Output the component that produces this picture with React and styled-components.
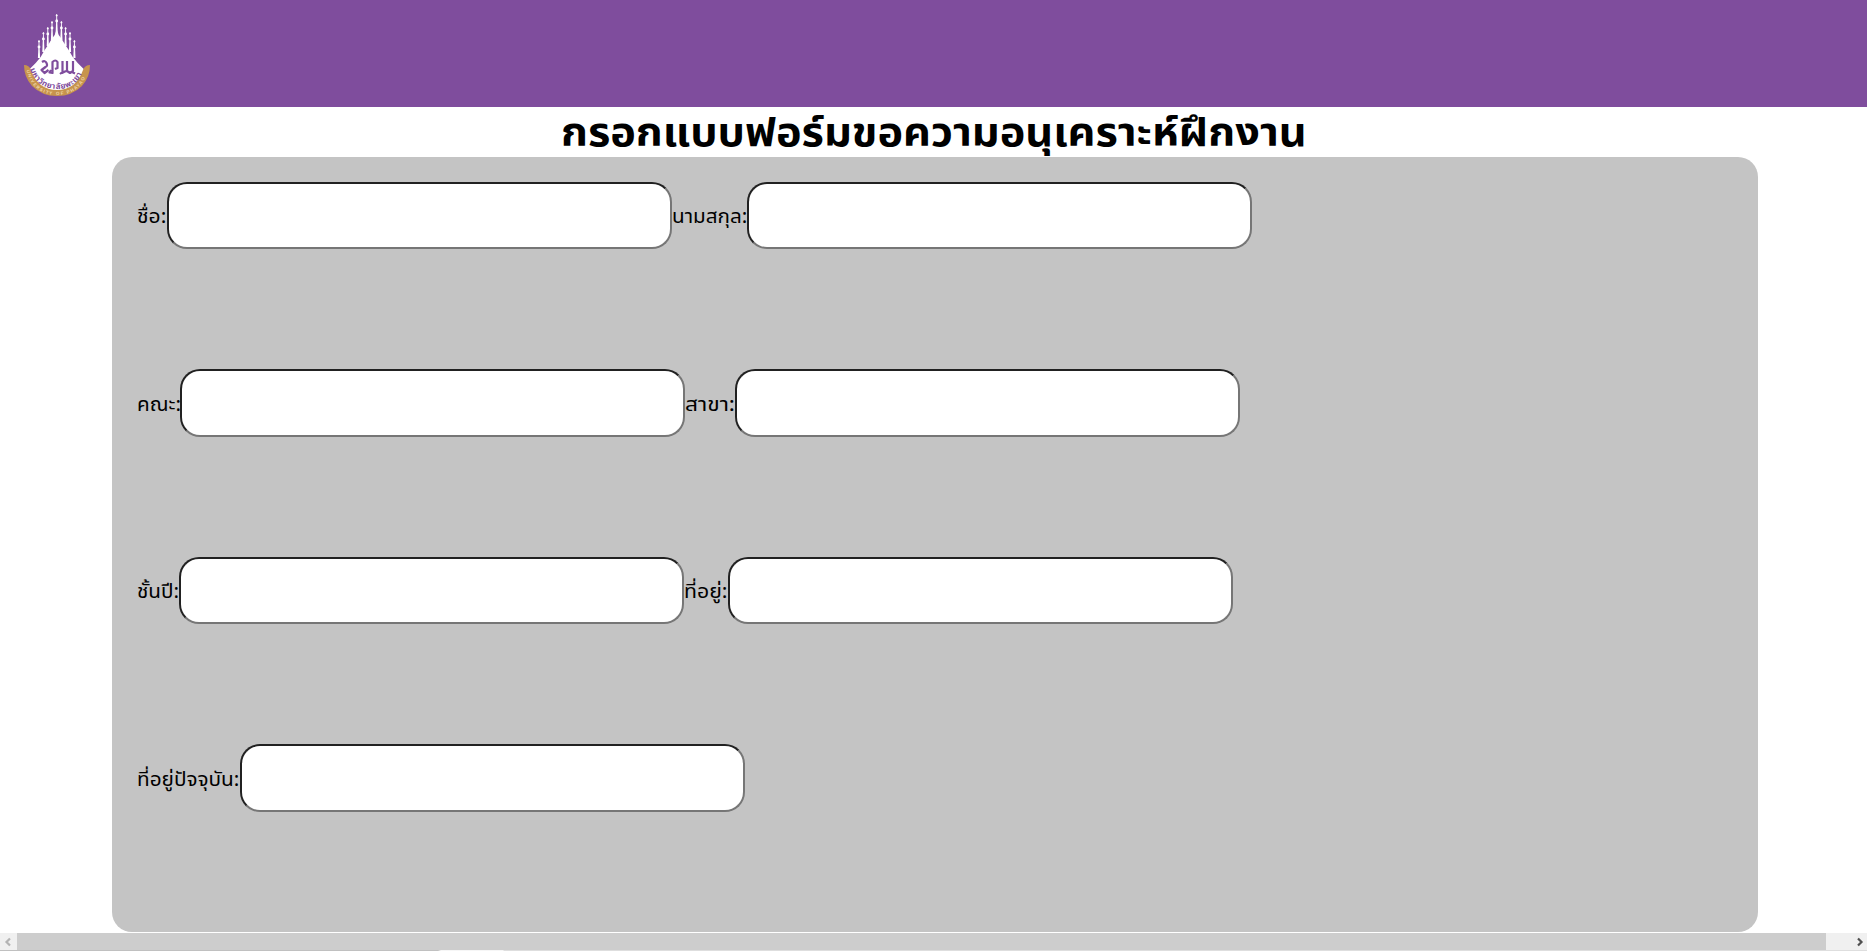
import React from "react";
import styled, { createGlobalStyle } from "styled-components";

const GlobalStyle = createGlobalStyle`
  body {
    margin: 0;
    overflow: hidden;
    background: #fff;
    color: #000;
    font-family: Tahoma, "Noto Sans Thai", "Noto Sans", sans-serif;
  }
`;

const Page = styled.div`
  display: flex;
  flex-direction: column;
  height: 951px;
`;

const Header = styled.header`
  display: flex;
  box-sizing: border-box;
  height: 107px;
  padding: 4px 0 0 10px;
  background: #7f4d9d;
`;

const Title = styled.h1`
  display: flex;
  justify-content: center;
  box-sizing: border-box;
  margin: 0;
  height: 50px;
  padding-top: 3px;
  font-size: 39px;
  line-height: 50px;
  font-weight: 700;
  white-space: nowrap;
`;

const TitleText = styled.span`
  display: block;
  transform: scaleX(1.107);
`;

const Panel = styled.form`
  display: grid;
  grid-auto-rows: 187.45px;
  box-sizing: border-box;
  width: 1646px;
  height: 775px;
  margin: 0 0 1px 112px;
  padding: 25px;
  border-radius: 20px;
  background: #c4c4c4;
`;

const Row = styled.div`
  display: flex;
  align-items: flex-start;
`;

const Label = styled.label`
  flex: none;
  box-sizing: border-box;
  width: ${(p) => p.$width}px;
  padding-top: 2.3px;
  font-size: 19.5px;
  line-height: 67px;
  white-space: nowrap;
`;

const LabelText = styled.span`
  display: inline-block;
  transform: scaleX(${(p) => p.$stretch});
  transform-origin: left center;
`;

const Input = styled.input`
  flex: none;
  box-sizing: border-box;
  width: 505px;
  height: 67.3px;
  margin: 0;
  padding: 0 12px;
  border: 2px inset #767676;
  border-radius: 20px;
  background: #fff;
  outline: none;
`;

const ScrollBar = styled.div`
  display: flex;
  height: 17px;
  background: #f0f0f0;
`;

const Thumb = styled.div`
  width: 1809px;
  background: #cdcdcd;
`;

const Arrow = styled.div`
  display: flex;
  align-items: center;
  width: 17px;
  margin-left: ${(p) => (p.$end ? "auto" : 0)};
  color: ${(p) => (p.$end ? "#505050" : "#b4b4b4")};
`;

const BottomEdge = styled.div`
  height: 1px;
  background: linear-gradient(to right, #c0c0c0 438px, #f6f6f6 441px, #f6f6f6 503px, #dedede 504px);
`;

const spires = [
  [46.7, 14, 34],
  [42, 21, 40],
  [51.4, 21, 40],
  [37.8, 27, 46],
  [55.6, 27, 46],
  [33.4, 32, 52],
  [60, 32, 52],
  [29, 40, 58],
  [64.4, 40, 58],
];

function Logo() {
  return (
    <svg width="95" height="99" viewBox="0 0 95 99">
      <g transform="translate(0 -4)">
        <g fill="#fff">
          {spires.map(([x, y, base]) => (
            <g key={x}>
              <path d={`M${x - 0.3} ${y}h.6l.8 ${base - y}h-2.2z`} />
              <circle cx={x} cy={y + 1.6} r="1" />
              <circle cx={x} cy={y + 7} r="1.4" />
            </g>
          ))}
          <path d="M46.7 29l2 6 3 4 3 5 4 6 4 7 5 6 6 6 2 6-6 7q-9 9-23 9t-23-9l-6-7 2-6 6-6 5-6 4-7 4-6 3-5 3-4z" />
        </g>
        <path
          d="M14 65q5 0 7 5 7 20 26 20t26-20q2-5 7-5 0 12-8 21-10 10-25 10T22 86q-8-9-8-21z"
          fill="#c7944d"
        />
        <g fill="none" stroke="#7f4d9d" strokeWidth="2.2" strokeLinejoin="round">
          <path d="M32 62q3-2 4.500 1t-1 4l-4 3 3 3 4-3" />
          <path d="M41 70l-1.500 2.500 3 .5v-11q3-3 5 0v6l-2.500 1" />
          <path d="M50 74l2.500-2V61M52 73l4-2M57 61v10l3 2 3-2V61M62 72l3 1.500" />
        </g>
        <defs>
          <path id="name-arc" d="M20 69q7 20 27 20t27-20" />
          <path id="university-arc" d="M16.500 70q6 25 30.500 25t30.500-25" />
        </defs>
        <text fill="#7f4d9d" fontSize="8" fontWeight="700" fontFamily="'Noto Sans Thai', sans-serif">
          <textPath href="#name-arc" textLength="67">มหาวิทยาลัยพะเยา</textPath>
        </text>
        <text fill="#f2d8aa" fontSize="4.5" fontWeight="700" fontFamily="'Liberation Sans', sans-serif">
          <textPath href="#university-arc" textLength="78">UNIVERSITY OF PHAYAO</textPath>
        </text>
      </g>
    </svg>
  );
}

function Chevron({ flip }) {
  return (
    <svg width="17" height="17" viewBox="0 0 17 17">
      <path d={flip ? "M8 5.500l3.500 3.500L8 12.500" : "M10 5.500L6.500 9l3.500 3.500"} fill="none" stroke="currentColor" strokeWidth="2.200" />
    </svg>
  );
}

const rows = [
  [
    { text: "ชื่อ:", width: 30, stretch: 1.08 },
    { text: "นามสกุล:", width: 75, stretch: 1.06 },
  ],
  [
    { text: "คณะ:", width: 43, stretch: 1.06 },
    { text: "สาขา:", width: 50, stretch: 1.165 },
  ],
  [
    { text: "ชั้นปี:", width: 42, stretch: 1.06 },
    { text: "ที่อยู่:", width: 44, stretch: 1.09 },
  ],
  [{ text: "ที่อยู่ปัจจุบัน:", width: 103, stretch: 1.065 }],
];

export default function App() {
  return (
    <Page>
      <GlobalStyle />
      <Header>
        <Logo />
      </Header>
      <Title>
        <TitleText>กรอกแบบฟอร์มขอความอนุเคราะห์ฝึกงาน</TitleText>
      </Title>
      <Panel>
        {rows.map((fields, i) => (
          <Row key={i}>
            {fields.map(({ text, width, stretch }, j) => (
              <React.Fragment key={text}>
                <Label $width={width} htmlFor={`field-${i}-${j}`}>
                  <LabelText $stretch={stretch}>{text}</LabelText>
                </Label>
                <Input id={`field-${i}-${j}`} type="text" />
              </React.Fragment>
            ))}
          </Row>
        ))}
      </Panel>
      <ScrollBar>
        <Arrow><Chevron /></Arrow>
        <Thumb />
        <Arrow $end><Chevron flip /></Arrow>
      </ScrollBar>
      <BottomEdge />
    </Page>
  );
}
